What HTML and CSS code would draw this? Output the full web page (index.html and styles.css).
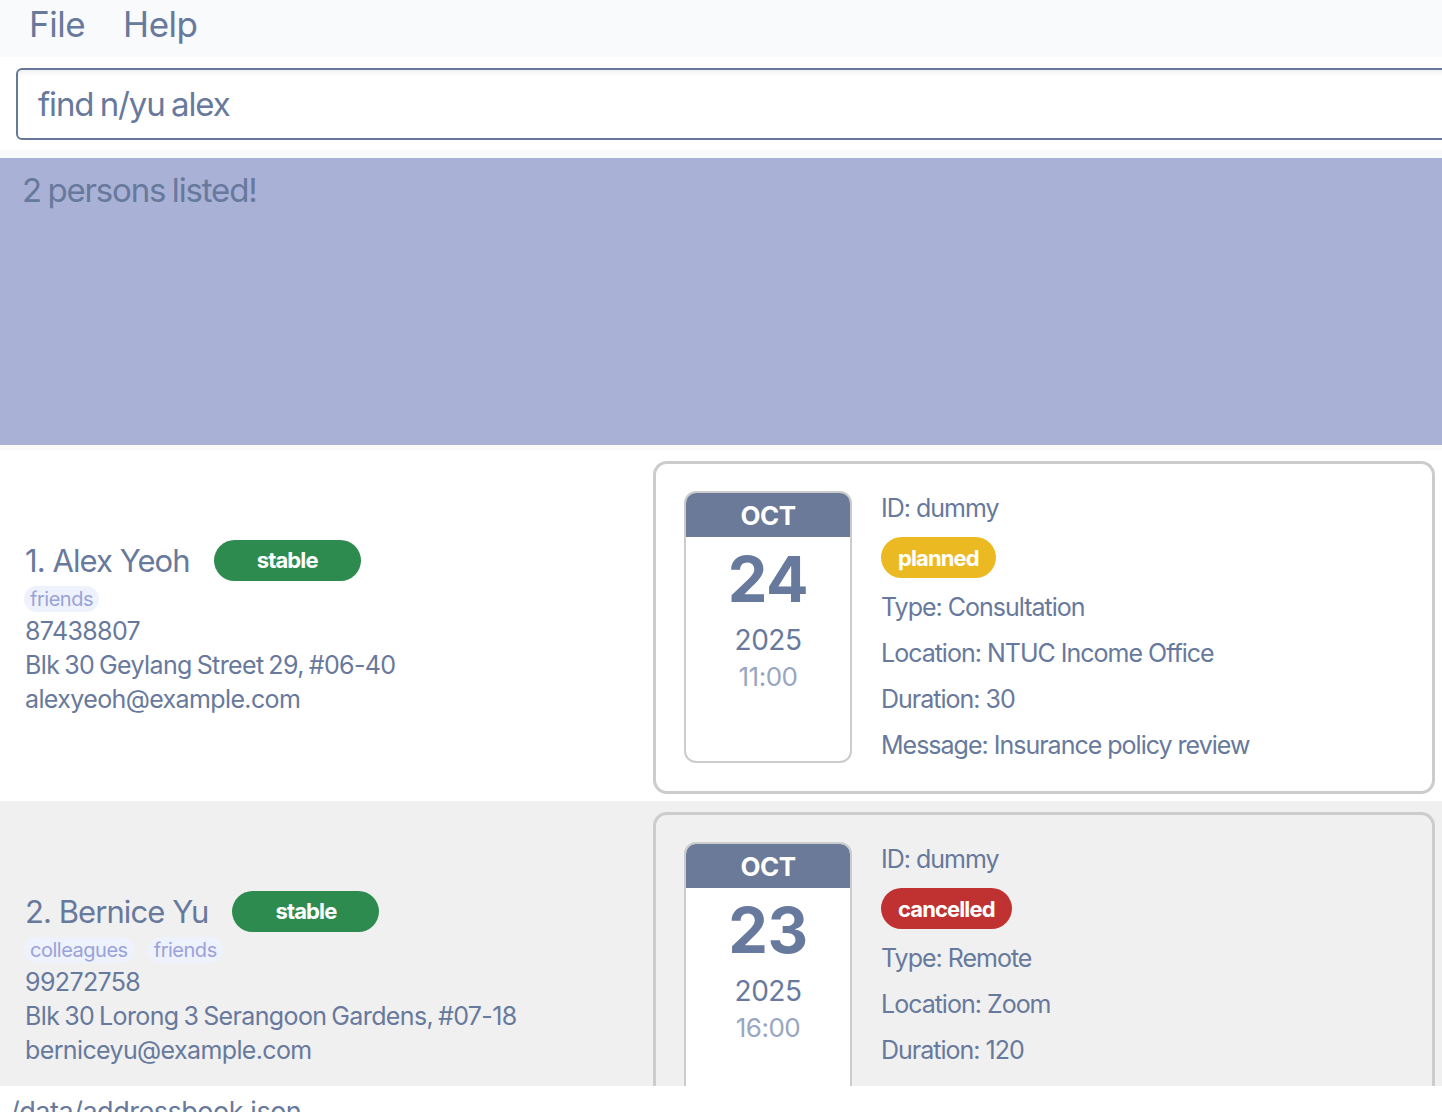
FILE: index.html
```html
<!DOCTYPE html>
<html>
<head>
<meta charset="utf-8">
<link rel="stylesheet" href="styles.css">
</head>
<body>
<div class="menubar">
  <span class="menu-item">File</span>
  <span class="menu-item">Help</span>
</div>
<div class="cmd-panel">
  <div class="cmd-box">find n/yu alex</div>
</div>
<div class="result">2 persons listed!</div>
<div class="list">
  <div class="row">
    <div class="person">
      <div class="name-line"><span class="name">1. Alex Yeoh</span><span class="pill stable">stable</span></div>
      <div class="tags"><span class="tag">friends</span></div>
      <div class="info">87438807</div>
      <div class="info">Blk 30 Geylang Street 29, #06-40</div>
      <div class="info">alexyeoh@example.com</div>
    </div>
    <div class="card">
      <div class="cal">
        <div class="cal-month">OCT</div>
        <div class="cal-day">24</div>
        <div class="cal-year">2025</div>
        <div class="cal-time">11:00</div>
      </div>
      <div class="details">
        <div class="dline">ID: dummy</div>
        <div><span class="pill planned">planned</span></div>
        <div class="dline">Type: Consultation</div>
        <div class="dline">Location: NTUC Income Office</div>
        <div class="dline">Duration: 30</div>
        <div class="dline">Message: Insurance policy review</div>
      </div>
    </div>
  </div>
  <div class="row alt">
    <div class="person">
      <div class="name-line"><span class="name">2. Bernice Yu</span><span class="pill stable">stable</span></div>
      <div class="tags"><span class="tag">colleagues</span><span class="tag">friends</span></div>
      <div class="info">99272758</div>
      <div class="info">Blk 30 Lorong 3 Serangoon Gardens, #07-18</div>
      <div class="info">berniceyu@example.com</div>
    </div>
    <div class="card">
      <div class="cal">
        <div class="cal-month">OCT</div>
        <div class="cal-day">23</div>
        <div class="cal-year">2025</div>
        <div class="cal-time">16:00</div>
      </div>
      <div class="details">
        <div class="dline">ID: dummy</div>
        <div><span class="pill cancelled">cancelled</span></div>
        <div class="dline">Type: Remote</div>
        <div class="dline">Location: Zoom</div>
        <div class="dline">Duration: 120</div>
        <div class="dline">Message: Client follow-up</div>
      </div>
    </div>
  </div>
</div>
<div class="status">/data/addressbook.json</div>
</body>
</html>
```

FILE: styles.css
```css
html, body {
  margin: 0;
  padding: 0;
}
body {
  width: 1442px;
  height: 1112px;
  overflow: hidden;
  background: #f8fafb;
  font-family: Inter, "Liberation Sans", sans-serif;
  color: #67799c;
  letter-spacing: -0.03em;
}
.menubar {
  height: 57px;
  box-sizing: border-box;
  display: flex;
  align-items: flex-start;
  gap: 38px;
  padding-left: 29px;
  font-size: 35px;
  line-height: 48px;
  background: #f8fafb;
}
.cmd-panel {
  background: #ffffff;
  padding: 11px 0 10px 16px;
}
.cmd-box {
  height: 68px;
  margin-right: -40px;
  border: 2px solid #66789a;
  border-radius: 6px;
  box-shadow: inset 0 6px 6px -4px rgba(0,0,0,0.08);
  background: #ffffff;
  font-size: 33px;
  line-height: 68px;
  padding-left: 20px;
  letter-spacing: -0.035em;
  word-spacing: -0.05em;
}
.result {
  margin-top: 8px;
  height: 287px;
  box-sizing: border-box;
  background: #a9b1d6;
  font-size: 33px;
  padding: 12px 22px;
  letter-spacing: -0.035em;
  word-spacing: -0.05em;
}
.list {
  height: 641px;
  overflow: hidden;
  padding-top: 5px;
  box-sizing: border-box;
  background: #fafafa;
}
.row {
  height: 351px;
  box-sizing: border-box;
  display: flex;
  padding: 11px 7px 7px 0;
  background: #ffffff;
}
.row.alt {
  background: #f0f0f0;
}
.person {
  width: 628px;
  padding-left: 25px;
  display: flex;
  flex-direction: column;
  justify-content: center;
}
.name-line {
  display: flex;
  align-items: center;
  height: 41px;
  gap: 24px;
}
.name {
  font-size: 31px;
  letter-spacing: -0.03em;
}
.pill {
  display: inline-flex;
  align-items: center;
  justify-content: center;
  height: 41px;
  border-radius: 21px;
  color: #ffffff;
  font-weight: 700;
  font-size: 22px;
  letter-spacing: -0.04em;
  padding: 0 17px;
  box-sizing: border-box;
}
.stable {
  background: #2e8b50;
  width: 147px;
}
.planned {
  background: #ebba22;
}
.cancelled {
  background: #c03232;
}
.tags {
  display: flex;
  gap: 14px;
  margin-top: 5px;
  margin-bottom: 2px;
  margin-left: -1px;
}
.tag {
  height: 26px;
  line-height: 26px;
  padding: 0 6px;
  border-radius: 13px;
  background: #eef2fd;
  color: #9aa2d8;
  font-size: 20px;
}
.info {
  font-size: 25px;
  line-height: 34px;
  letter-spacing: -0.025em;
  word-spacing: -0.06em;
}
.card {
  flex: 1;
  display: flex;
  gap: 29px;
  border: 3px solid #cccccc;
  border-radius: 14px;
  padding: 27px 28px 28px 28px;
}
.cal {
  width: 168px;
  box-sizing: border-box;
  border: 2px solid #cccccc;
  border-radius: 12px;
  background: #ffffff;
  overflow: hidden;
  display: flex;
  flex-direction: column;
  align-items: center;
}
.cal-month {
  align-self: stretch;
  height: 44px;
  background: #6a7a98;
  color: #ffffff;
  font-weight: 700;
  font-size: 26px;
  line-height: 46px;
  text-align: center;
}
.cal-day {
  font-size: 63px;
  font-weight: 700;
  line-height: 76px;
  margin-top: 4px;
}
.cal-year {
  font-size: 28px;
  line-height: 34px;
  margin-top: 6px;
}
.cal-time {
  font-size: 26px;
  line-height: 34px;
  margin-top: 3px;
  color: #98a6c0;
}
.details {
  display: flex;
  flex-direction: column;
  gap: 12px;
}
.dline {
  font-size: 25px;
  line-height: 34px;
  letter-spacing: -0.04em;
}
.status {
  height: 26px;
  box-sizing: border-box;
  background: #ffffff;
  font-size: 27px;
  line-height: 36px;
  padding: 8px 0 0 10px;
  overflow: hidden;
}
```
